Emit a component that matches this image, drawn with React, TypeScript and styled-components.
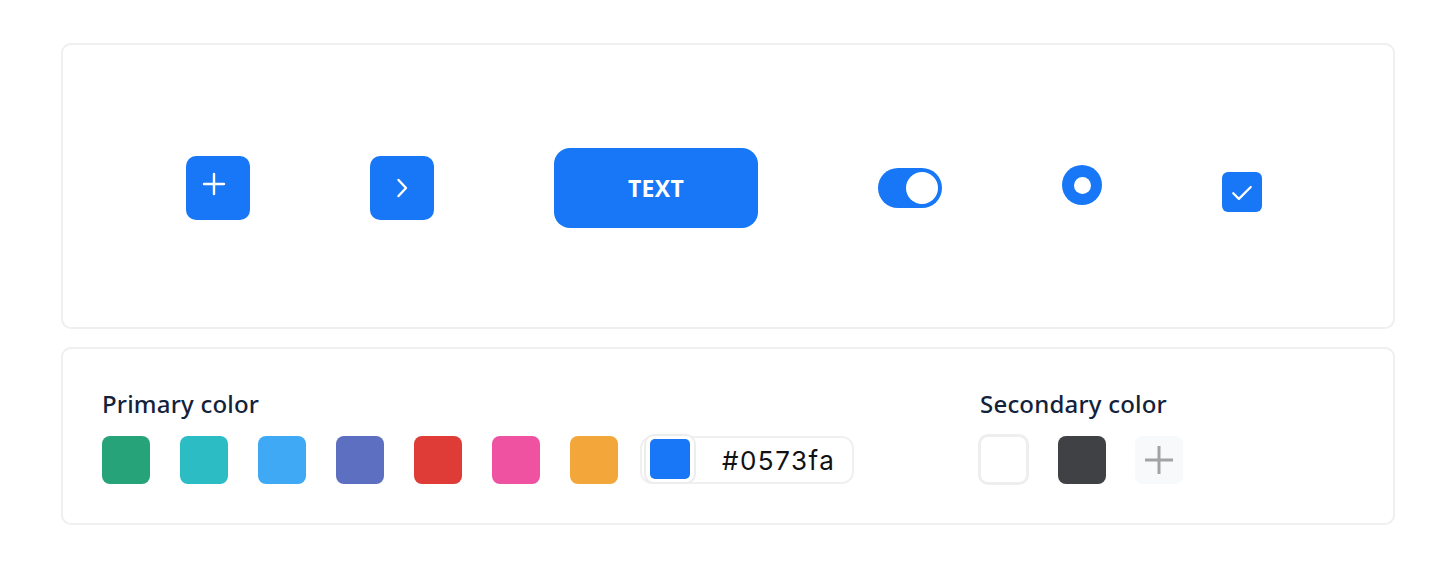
import React from "react";
import styled, { createGlobalStyle } from "styled-components";

const GlobalStyle = createGlobalStyle`
  body {
    margin: 0;
    background: #ffffff;
    font-family: "Open Sans", "Noto Sans", sans-serif;
  }
`;

const BLUE = "#1877f6";

const Page = styled.div`
  display: flex;
  flex-direction: column;
  gap: 18px;
  padding: 43px 53px 0 61px;
`;

const Card = styled.div`
  box-sizing: border-box;
  border: 2px solid #efefef;
  border-radius: 10px;
  background: #ffffff;
`;

const PreviewCard = styled(Card)`
  height: 286px;
  display: flex;
  align-items: center;
  gap: 120px;
  padding: 4px 0 0 123px;
`;

const Slot = styled.div<{ $offset?: number }>`
  display: flex;
  margin-top: ${(p) => p.$offset ?? 0}px;
`;

const IconButton = styled.button`
  width: 64px;
  height: 64px;
  border: none;
  border-radius: 10px;
  background: ${BLUE};
  color: #ffffff;
  display: flex;
  align-items: center;
  justify-content: center;
  padding: 0;
`;

const PlusGlyph = styled.svg`
  margin: 0 8px 8px 0;
`;

const TextButton = styled.button`
  width: 204px;
  height: 80px;
  border: none;
  border-radius: 16px;
  background: ${BLUE};
  color: #ffffff;
  font-family: "Open Sans", sans-serif;
  font-weight: 700;
  font-size: 23px;
  letter-spacing: 0.3px;
`;

const Toggle = styled.div`
  box-sizing: border-box;
  width: 64px;
  height: 40px;
  border-radius: 20px;
  background: ${BLUE};
  padding: 4px;
  display: flex;
  justify-content: flex-end;
`;

const Knob = styled.div`
  width: 32px;
  height: 32px;
  border-radius: 50%;
  background: #ffffff;
`;

const Radio = styled.div`
  width: 40px;
  height: 40px;
  border-radius: 50%;
  background: ${BLUE};
  display: flex;
  align-items: center;
  justify-content: center;
`;

const RadioDot = styled.div`
  width: 17px;
  height: 17px;
  border-radius: 50%;
  background: #ffffff;
`;

const Checkbox = styled.div`
  width: 40px;
  height: 40px;
  border-radius: 6px;
  background: ${BLUE};
  display: flex;
  align-items: center;
  justify-content: center;
`;

const ColorCard = styled(Card)`
  height: 178px;
  display: flex;
  gap: 126px;
  padding: 40px 40px 0 39px;
`;

const Group = styled.div`
  display: flex;
  flex-direction: column;
  gap: 17px;
`;

const Label = styled.div`
  font-family: "Noto Sans", "Open Sans", sans-serif;
  font-size: 24px;
  line-height: 30px;
  font-weight: 500;
  letter-spacing: 0.2px;
  color: #13223b;
`;

const SwatchRow = styled.div<{ $gap: number }>`
  display: flex;
  align-items: flex-start;
  gap: ${(p) => p.$gap}px;
`;

const Swatch = styled.div<{ $color: string }>`
  width: 48px;
  height: 48px;
  border-radius: 8px;
  background: ${(p) => p.$color};
`;

const EmptySwatch = styled.div`
  box-sizing: border-box;
  width: 51px;
  height: 51px;
  margin: -2px 0 0 -2px;
  border-radius: 10px;
  border: 3px solid #eeeeee;
  background: #ffffff;
`;

const AddSwatch = styled.div`
  width: 48px;
  height: 48px;
  border-radius: 8px;
  background: #f7f9fa;
  display: flex;
  align-items: center;
  justify-content: center;
`;

const HexInput = styled.div`
  box-sizing: border-box;
  width: 214px;
  height: 48px;
  margin-left: -8px;
  border: 2px solid #f0f0f0;
  border-radius: 12px;
  display: flex;
  align-items: center;
  gap: 26px;
  padding-left: 2px;
`;

const HexSwatchFrame = styled.div`
  box-sizing: border-box;
  width: 52px;
  height: 50px;
  margin-top: -2px;
  border: 2px solid #ededed;
  border-radius: 10px;
  background: #ffffff;
  display: flex;
  align-items: center;
  justify-content: center;
`;

const HexColor = styled.div`
  width: 40px;
  height: 40px;
  border-radius: 5px;
  background: ${BLUE};
`;

const HexText = styled.span`
  font-family: "Inter", "Lato", sans-serif;
  font-size: 26px;
  letter-spacing: 1.5px;
  color: #111111;
`;

const primary = ["#27a37a", "#2bbcc4", "#3fa9f5", "#5d6fc0", "#e03c37", "#ee52a0", "#f3a73b"];

export default function App() {
  return (
    <>
      <GlobalStyle />
      <Page>
        <PreviewCard>
          <Slot>
            <IconButton>
              <PlusGlyph width="24" height="24" viewBox="0 0 24 24" fill="none" stroke="#fff" strokeWidth="2.4" strokeLinecap="round">
                <path d="M12 2v20M2 12h20" />
              </PlusGlyph>
            </IconButton>
          </Slot>
          <Slot>
            <IconButton>
              <svg width="24" height="24" viewBox="0 0 24 24" fill="none" stroke="#fff" strokeWidth="2.4" strokeLinecap="round" strokeLinejoin="round">
                <path d="M8.5 4l7.5 8-7.5 8" />
              </svg>
            </IconButton>
          </Slot>
          <Slot>
            <TextButton>TEXT</TextButton>
          </Slot>
          <Slot>
            <Toggle>
              <Knob />
            </Toggle>
          </Slot>
          <Slot $offset={-6}>
            <Radio>
              <RadioDot />
            </Radio>
          </Slot>
          <Slot $offset={8}>
            <Checkbox>
              <svg width="30" height="30" viewBox="0 0 24 24" fill="none" stroke="#fff" strokeWidth="1.8" strokeLinecap="round" strokeLinejoin="round">
                <path d="M5 13l4.5 4.5L19 8" />
              </svg>
            </Checkbox>
          </Slot>
        </PreviewCard>
        <ColorCard>
          <Group>
            <Label>Primary color</Label>
            <SwatchRow $gap={30}>
              {primary.map((c) => (
                <Swatch key={c} $color={c} />
              ))}
              <HexInput>
                <HexSwatchFrame>
                  <HexColor />
                </HexSwatchFrame>
                <HexText>#0573fa</HexText>
              </HexInput>
            </SwatchRow>
          </Group>
          <Group>
            <Label>Secondary color</Label>
            <SwatchRow $gap={29}>
              <EmptySwatch />
              <Swatch $color="#3f4144" />
              <AddSwatch>
                <svg width="32" height="32" viewBox="0 0 32 32" fill="none" stroke="#a3a3a3" strokeWidth="3">
                  <path d="M16 2v28M2 16h28" />
                </svg>
              </AddSwatch>
            </SwatchRow>
          </Group>
        </ColorCard>
      </Page>
    </>
  );
}
